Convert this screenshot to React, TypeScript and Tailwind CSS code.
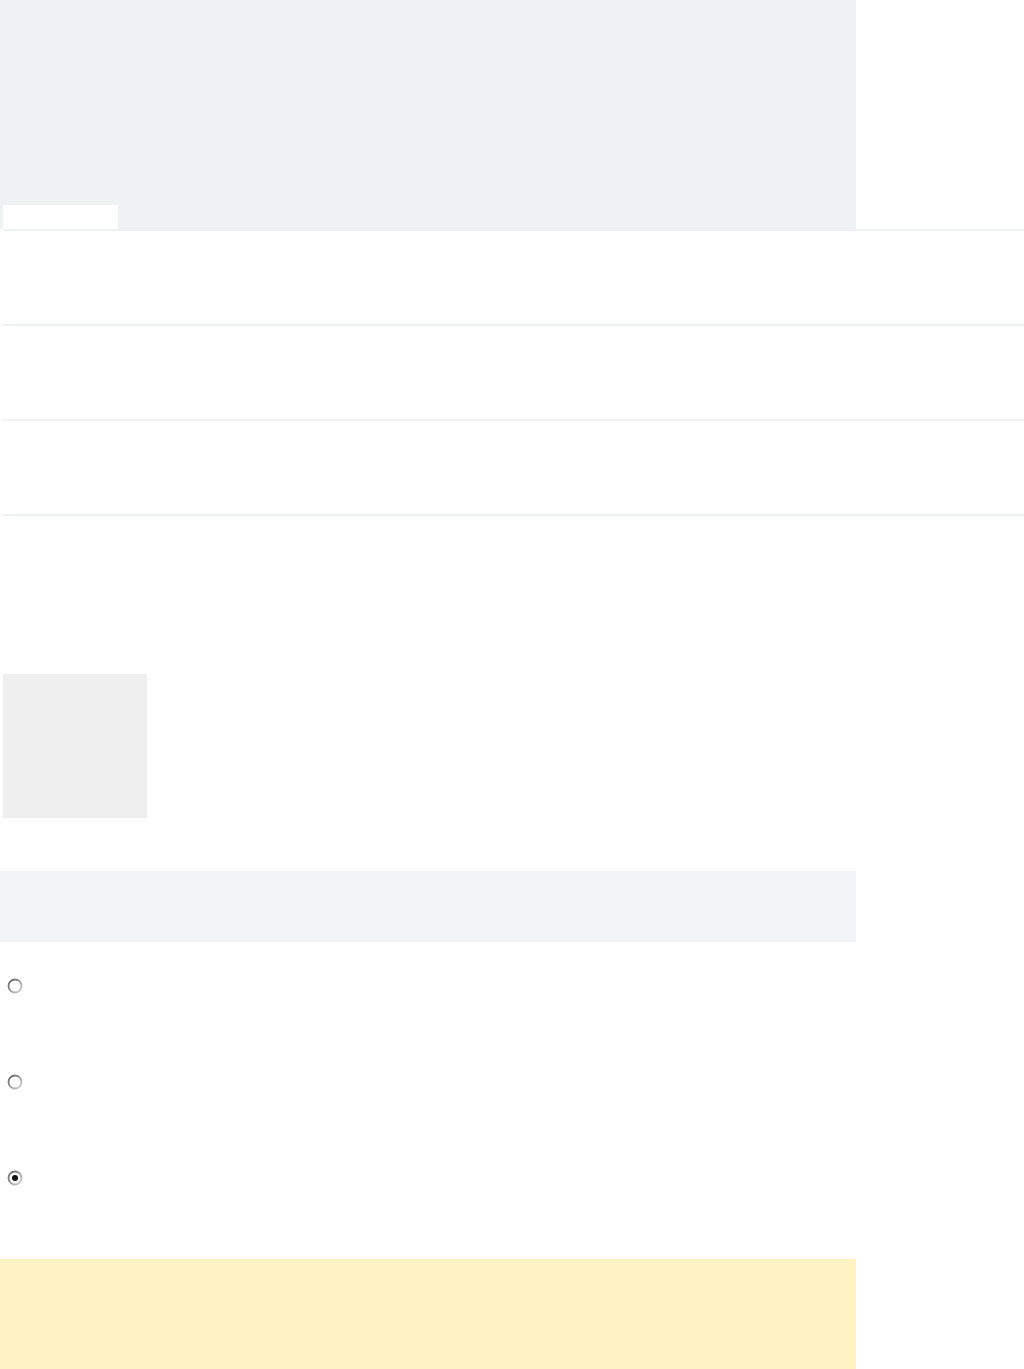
import React from "react";

function Radio({ checked }: { checked?: boolean }) {
  return (
    <svg width="16" height="16" viewBox="0 0 16 16" className="block">
      <defs>
        <linearGradient id={checked ? "rgc" : "rg"} x1="0" y1="0" x2="1" y2="1">
          <stop offset="0" stopColor="#5e5e5e" />
          <stop offset="1" stopColor="#d6d6d6" />
        </linearGradient>
      </defs>
      <circle cx="8" cy="8" r="6.5" fill="#ffffff" stroke={`url(#${checked ? "rgc" : "rg"})`} strokeWidth="1.8" />
      {checked && <circle cx="8" cy="8" r="3" fill="#111111" />}
    </svg>
  );
}

export default function App() {
  return (
    <div className="w-[1024px] min-h-[1369px] bg-white flex flex-col" style={{ fontFamily: "'Liberation Sans', Arial, sans-serif" }}>
      <div className="w-[856px] h-[229px] bg-[#eef2f2] flex items-end">
        <div className="ml-[3px] w-[115px] h-[24px] bg-white" />
      </div>
      <div className="ml-[3px] flex flex-col border-t-2 border-[#edf1f1]">
        <div className="h-[95px] border-b-2 border-[#edf1f1]" />
        <div className="h-[95px] border-b-2 border-[#f1f3f3]" />
        <div className="h-[95px] border-b-2 border-[#edf1f1]" />
      </div>
      <div className="ml-[3px] mt-[158px] w-[144px] h-[144px] bg-[#efefef]" />
      <div className="mt-[53px] w-[856px] h-[71px] bg-[#f1f5f8]" />
      <div className="flex flex-col pl-[7px] pt-[36px] gap-[80px]">
        <Radio />
        <Radio />
        <Radio checked />
      </div>
      <div className="mt-[73px] w-[856px] h-[110px] bg-[#fff3c3]" />
    </div>
  );
}
